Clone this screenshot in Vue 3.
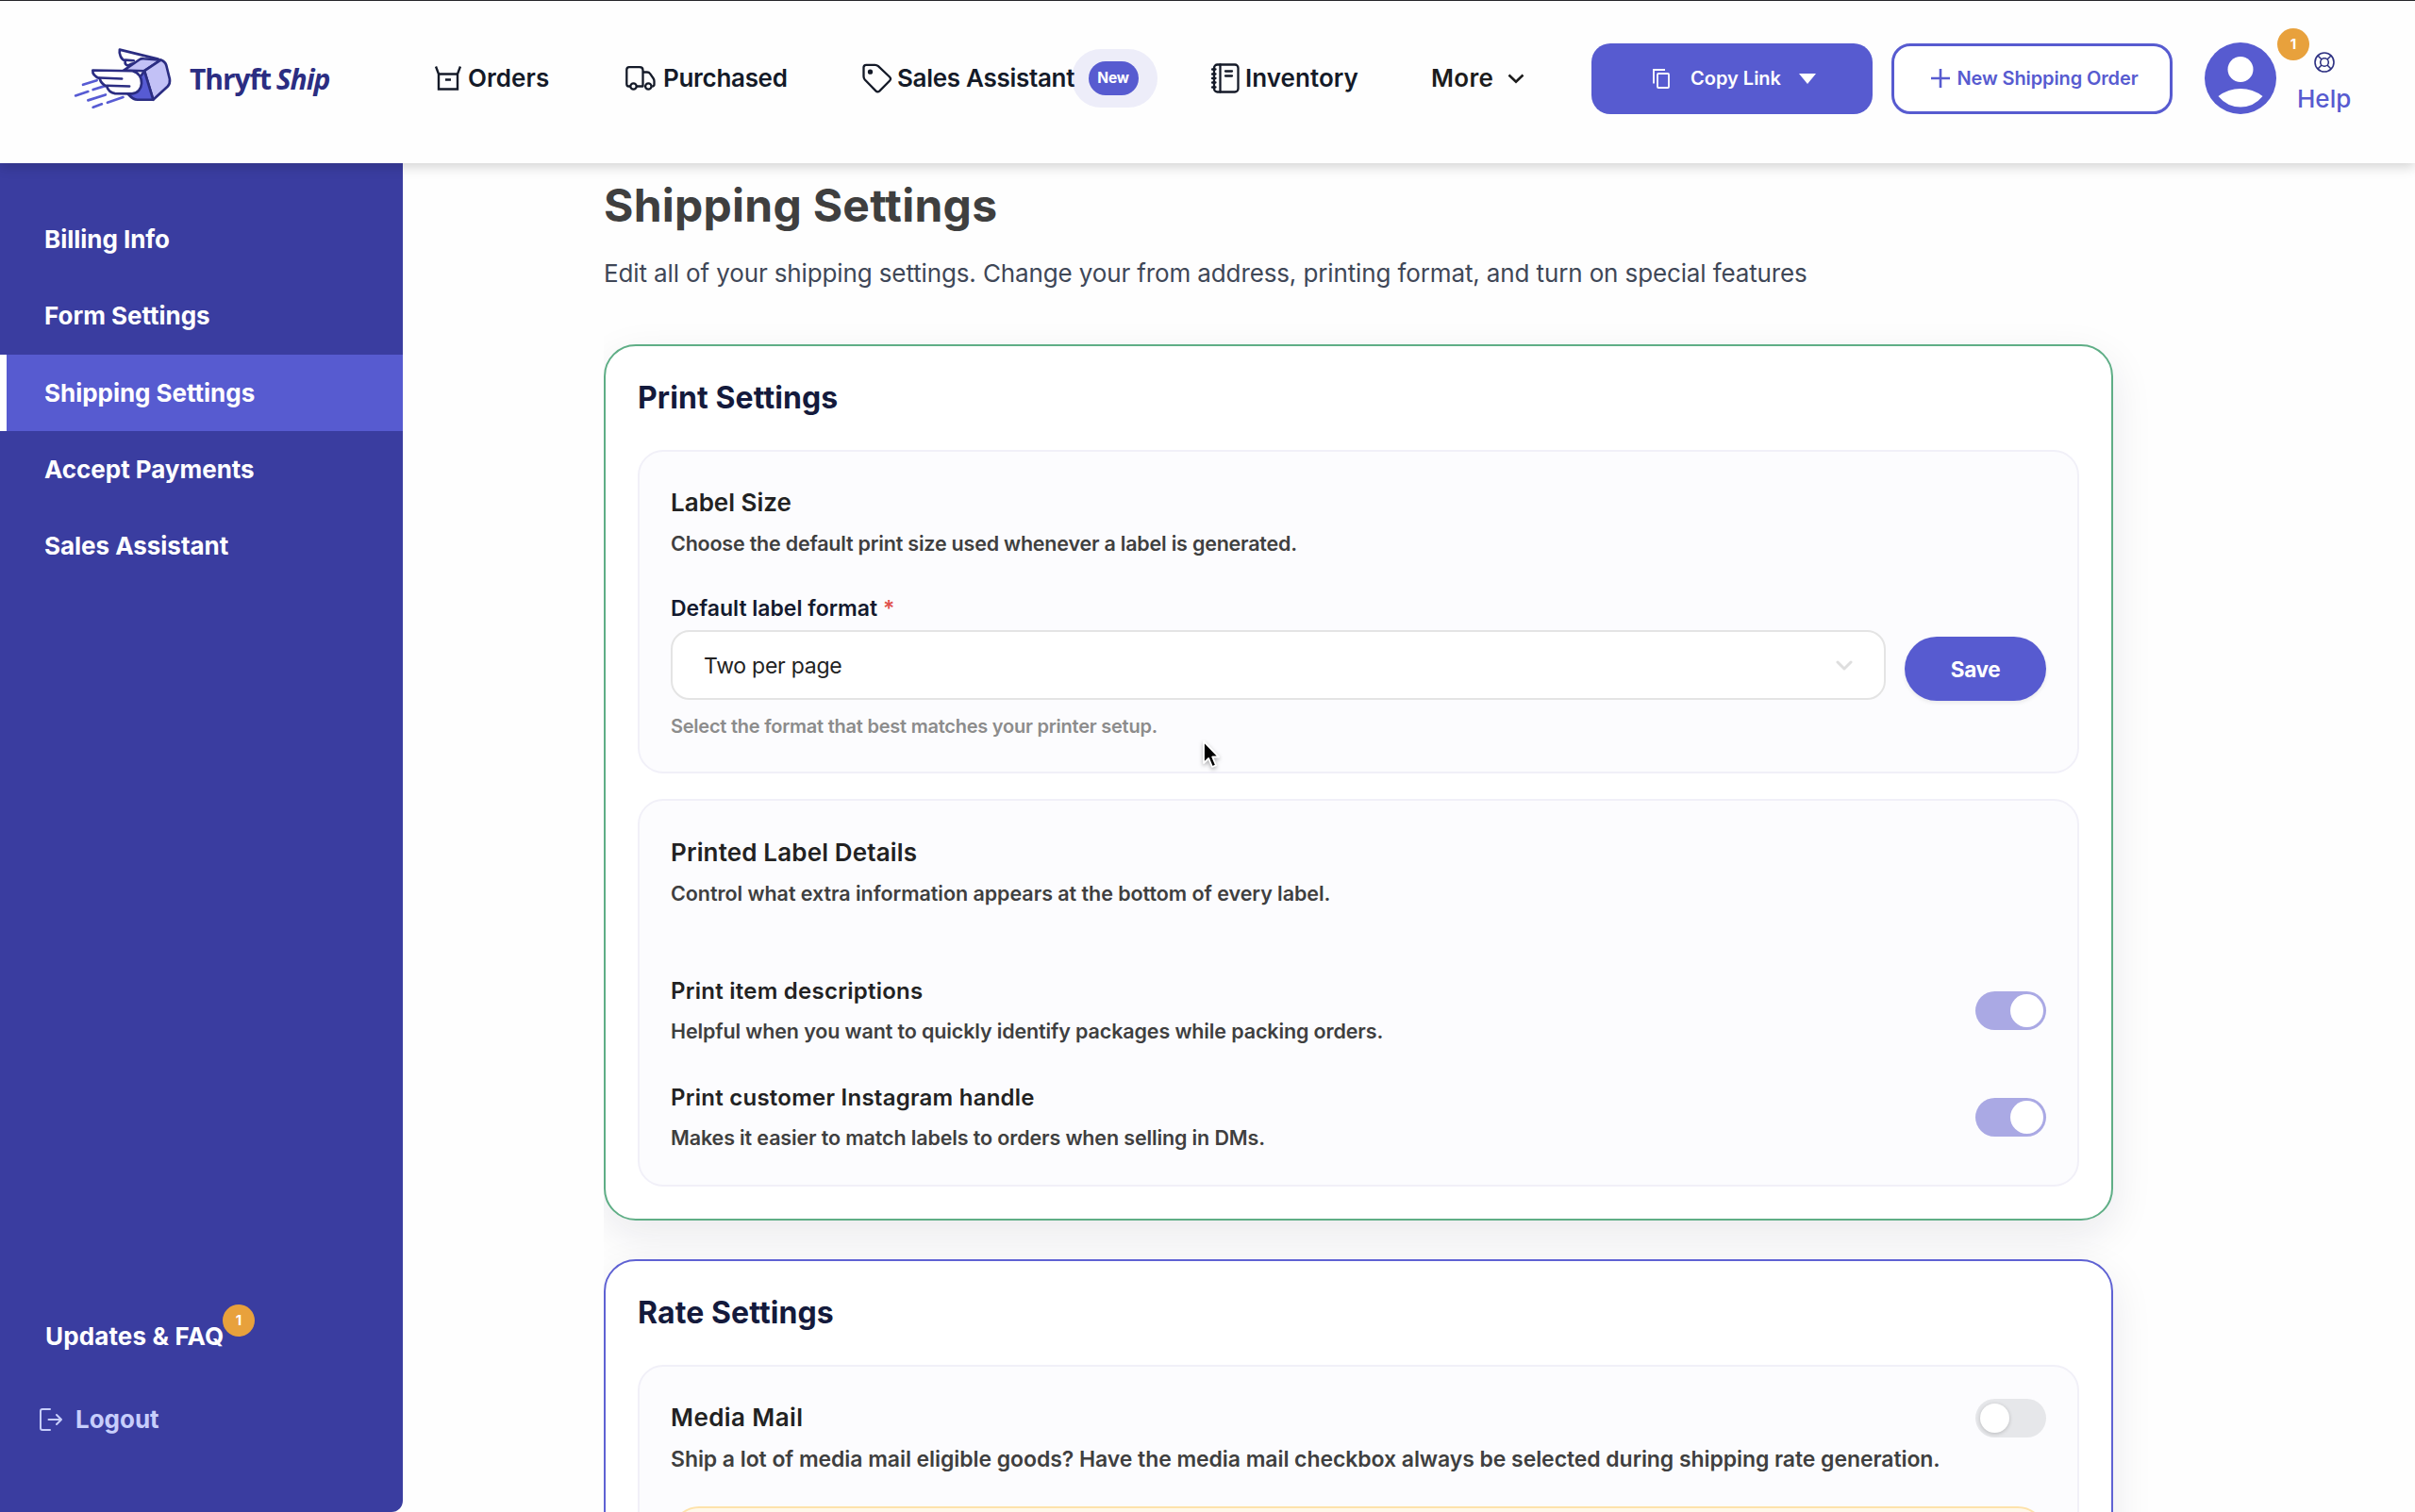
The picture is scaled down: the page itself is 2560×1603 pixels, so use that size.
<template>
  <div class="app">
    <header class="header">
      <div class="logo">
        <svg class="logo-mark" viewBox="50 55 320 205" fill="none" stroke-linecap="round" stroke-linejoin="round">
          <g stroke="#575bd3" stroke-width="8">
            <path d="M82 178 L126 164 M58 213 L98 200 M114 194 L152 182 M98 228 L154 210 M114 250 L142 240 M160 235 L210 218" />
          </g>
          <g stroke="#2b2d82" stroke-width="8">
            <path d="M199 66 L322 96 L236 112 C222 122 214 112 217 101 C204 98 196 80 199 66 Z" fill="#fff" />
            <path d="M218 99 L244 101" />
            <path d="M212 132 L262 98 Q268 94 276 95 L330 99 L278 134 Z" fill="#c2c1f6" />
            <path d="M330 99 Q344 104 348 116 L359 160 Q361 174 352 184 L306 226 L278 134 Z" fill="#c2c1f6" />
            <path d="M226 208 L278 134 L306 226 L256 226 Q242 226 226 208 Z" fill="#575bd3" />
            <path d="M113 132 L240 134 C282 144 276 206 238 207 L184 206 C168 204 162 196 158 184 C144 178 138 170 135 158 C120 152 112 142 113 132 Z" fill="#fff" />
            <path d="M135 156 L206 159 M158 181 L230 183" />
          </g>
        </svg>
        <span class="logo-name">Thryft</span>
        <span class="logo-name logo-ship">Ship</span>
      </div>

      <a class="nav-item orders">
        <svg class="icon-orders" viewBox="0 0 28 26" fill="none" stroke="currentColor" stroke-width="2.4">
          <path d="M1 .5 L4 8.5 H24 L27 .5 M4 8.5 V24.5 H24 V8.5 M11 14.5 H17" />
        </svg>
        <span>Orders</span>
      </a>
      <a class="nav-item">
        <svg class="icon-truck" viewBox="0 0 32 26" fill="none" stroke="currentColor" stroke-width="2.3" stroke-linejoin="round">
          <path d="M5 21.5 H3.2 Q1.3 21.5 1.3 19 V4 Q1.3 1.2 4 1.2 H15 Q18.5 1.2 18.5 4.5 V21.5 H12 M18.5 6.5 H23 Q25 6.5 26.3 8.3 L29.5 13 Q30.5 14.5 30.5 16 V19.5 Q30.5 21.5 28.2 21.5" />
          <circle cx="8.5" cy="21.5" r="3.2" />
          <circle cx="24.3" cy="21.5" r="3.2" />
        </svg>
        <span>Purchased</span>
      </a>
      <a class="nav-item">
        <svg class="icon-tag" viewBox="0 0 32 32" fill="none" stroke="currentColor" stroke-width="2.3" stroke-linejoin="round">
          <path d="M1.5 4.5 Q1.5 1.8 4.2 1.8 H13.5 Q15.5 1.8 17 3.2 L29 14.5 Q31 16.5 29.2 18.5 L18.2 29.6 Q16.2 31.2 14.4 29.4 L2.8 17.5 Q1.5 16 1.5 14 Z" />
          <circle cx="8.5" cy="9.2" r="1.5" fill="currentColor" />
        </svg>
        <span>Sales Assistant</span>
        <span class="new-halo"><span class="new-pill">New</span></span>
      </a>
      <a class="nav-item inventory">
        <svg class="icon-book" viewBox="0 0 30 32" fill="none" stroke="currentColor" stroke-width="2.3" stroke-linecap="round">
          <rect x="3" y="1.5" width="25.5" height="29" rx="3.5" />
          <path d="M9.5 1.5 V30.5 M15 8.5 H22 M15 13.5 H22 M1 6.5 H4.5 M1 11.5 H4.5 M1 16 H4.5 M1 20.5 H4.5 M1 25.5 H4.5" />
        </svg>
        <span>Inventory</span>
      </a>
      <a class="nav-item more">
        <span>More</span>
        <svg class="icon-more" viewBox="0 0 18 11" fill="none" stroke="currentColor" stroke-width="2.6">
          <path d="M1.5 1.5 L9 8.8 L16.5 1.5" />
        </svg>
      </a>

      <button class="btn btn-copy">
        <svg class="icon-copy" viewBox="0 0 18 21" fill="none" stroke="currentColor" stroke-width="1.8">
          <path d="M1 15.5 V1 H13" />
          <rect x="5" y="5" width="12" height="15" rx="1" />
        </svg>
        <span>Copy Link</span>
        <svg class="icon-caret" viewBox="0 0 18 11" fill="currentColor"><path d="M0 0 H18 L9 11 Z" /></svg>
      </button>
      <button class="btn btn-order">
        <svg class="icon-plus" viewBox="0 0 20 20" fill="none" stroke="currentColor" stroke-width="2.6">
          <path d="M10 0 V20 M0 10 H20" />
        </svg>
        <span>New Shipping Order</span>
      </button>

      <div class="account">
        <svg class="avatar" viewBox="0 0 76 76">
          <circle cx="38" cy="38" r="38" fill="#575bd0" />
          <circle cx="38" cy="28.5" r="13.5" fill="#fff" />
          <path d="M14.5 57 Q25 49 38 49 Q51 49 61.5 57 Q52 68.5 38 68.5 Q24 68.5 14.5 57 Z" fill="#fff" />
        </svg>
        <a class="help">
          <span class="badge help-badge">1</span>
          <svg class="icon-help" viewBox="0 0 22 22" fill="none" stroke="#2e3182" stroke-width="1.6">
            <circle cx="11" cy="11" r="10" />
            <circle cx="11" cy="11" r="4.3" />
            <path d="M4 4 L8 8 M18 4 L14 8 M4 18 L8 14 M18 18 L14 14" />
          </svg>
          <span>Help</span>
        </a>
      </div>
    </header>

    <div class="body">
      <aside class="sidebar">
        <nav>
          <a
            v-for="item in menu"
            :key="item"
            class="side-item"
            :class="{ active: item === activeItem }"
          >{{ item }}</a>
        </nav>
        <div class="side-bottom">
          <a class="updates">Updates &amp; FAQ<span class="badge">1</span></a>
          <a class="logout">
            <svg class="icon-logout" viewBox="0 0 24 24" fill="none" stroke="currentColor" stroke-width="2" stroke-linecap="round" stroke-linejoin="round">
              <path d="M11 1 H3 Q1 1 1 3 V21 Q1 23 3 23 H11 M9.5 12 H23 M18 7 L23 12 L18 17" />
            </svg>
            <span>Logout</span>
          </a>
        </div>
      </aside>

      <main class="main">
        <h1 class="page-title">Shipping Settings</h1>
        <p class="page-desc">Edit all of your shipping settings. Change your from address, printing format, and turn on special features</p>

        <div class="cards">
          <section class="card card-print">
            <h2 class="card-title">Print Settings</h2>
            <div class="panel panel-size">
              <h3 class="panel-title">Label Size</h3>
              <p class="panel-desc size-desc">Choose the default print size used whenever a label is generated.</p>
              <div class="form-row">
                <div class="field">
                  <label class="field-label">Default label format <span class="required">*</span></label>
                  <div class="select">
                    <span>{{ labelFormat }}</span>
                    <svg class="icon-select" viewBox="0 0 18 12" fill="none" stroke="#dedede" stroke-width="3" stroke-linecap="round" stroke-linejoin="round">
                      <path d="M2 2 L9 9 L16 2" />
                    </svg>
                  </div>
                  <p class="field-hint">Select the format that best matches your printer setup.</p>
                </div>
                <button class="save">Save</button>
              </div>
            </div>

            <div class="panel panel-details">
              <h3 class="panel-title details-title">Printed Label Details</h3>
              <p class="panel-desc details-desc">Control what extra information appears at the bottom of every label.</p>
              <div class="options">
                <div v-for="option in options" :key="option.title" class="option">
                  <div>
                    <h4 class="option-title">{{ option.title }}</h4>
                    <p class="panel-desc option-desc">{{ option.desc }}</p>
                  </div>
                  <span class="toggle" :class="{ on: option.enabled }"></span>
                </div>
              </div>
            </div>
          </section>

          <section class="card card-rate">
            <h2 class="card-title">Rate Settings</h2>
            <div class="panel panel-media">
              <div class="media-head">
                <h3 class="panel-title media-title">Media Mail</h3>
                <span class="toggle" :class="{ on: mediaMail }"></span>
              </div>
              <p class="media-desc">Ship a lot of media mail eligible goods? Have the media mail checkbox always be selected during shipping rate generation.</p>
              <div class="notice"></div>
            </div>
          </section>
        </div>
      </main>
    </div>

    <!-- mouse pointer -->
    <svg class="cursor" viewBox="0 0 20 32">
      <path d="M2 2 V25 L7.2 20 L11 29 L15 27.3 L11.2 18.5 H18 Z" fill="#000" stroke="#fff" stroke-width="1.8" stroke-linejoin="round" />
    </svg>
  </div>
</template>

<script setup>
import { ref } from 'vue';

const menu = [
  'Billing Info',
  'Form Settings',
  'Shipping Settings',
  'Accept Payments',
  'Sales Assistant'
];
const activeItem = ref('Shipping Settings');

const labelFormat = ref('Two per page');
const mediaMail = ref(false);

const options = ref([
  {
    title: 'Print item descriptions',
    desc: 'Helpful when you want to quickly identify packages while packing orders.',
    enabled: true
  },
  {
    title: 'Print customer Instagram handle',
    desc: 'Makes it easier to match labels to orders when selling in DMs.',
    enabled: true
  }
]);
</script>

<style>
body {
  margin: 0;
  background: #fff;
}
</style>

<style scoped>
.app {
  position: relative;
  display: flex;
  flex-direction: column;
  width: 2560px;
  height: 1603px;
  overflow: hidden;
  background: #fefefe;
  font-family: Inter, "Liberation Sans", sans-serif;
  color: #222;
}

.app * {
  box-sizing: border-box;
}

h1, h2, h3, h4, p {
  margin: 0;
}

span, a {
  white-space: nowrap;
}

button {
  font-family: inherit;
  border: none;
  padding: 0;
}

svg {
  display: block;
  flex-shrink: 0;
}

/* header */
.header {
  position: relative;
  z-index: 2;
  flex-shrink: 0;
  display: grid;
  grid-template-columns: 384px 202px 251px 370px 235px 168px 318px 332px 1fr;
  align-items: center;
  height: 173px;
  padding: 0 0 8px 77px;
  border-top: 1px solid #26262a;
  background: #fefefe;
  box-shadow: 0 4px 12px rgba(0, 0, 0, 0.17);
}

.logo {
  display: flex;
  align-items: center;
}

.logo-mark {
  width: 107px;
  height: 68px;
  margin-right: 17px;
}

.logo-name {
  font-family: "Open Sans", "Noto Sans", sans-serif;
  font-size: 30px;
  font-weight: 700;
  letter-spacing: -1.1px;
  color: #2b2d82;
}

.logo-ship {
  margin-left: 6px;
  font-style: italic;
}

.nav-item {
  display: flex;
  align-items: center;
  font-size: 26px;
  font-weight: 600;
  line-height: 32px;
  letter-spacing: -0.3px;
  color: #141a28;
}

.orders,
.inventory {
  letter-spacing: 0.05px;
}

.icon-orders {
  width: 28px;
  height: 26px;
  margin-right: 7px;
}

.icon-truck {
  width: 32px;
  height: 26px;
  margin-right: 8px;
}

.icon-tag {
  width: 32px;
  height: 32px;
  margin-right: 5px;
}

.icon-book {
  width: 30px;
  height: 32px;
  margin-right: 6px;
}

.icon-more {
  width: 18px;
  height: 11px;
  margin-left: 15px;
}

.more {
  margin-left: -2px;
  letter-spacing: 0.3px;
  color: #1c1c1c;
}

.new-halo {
  display: flex;
  align-items: center;
  justify-content: center;
  width: 91px;
  height: 62px;
  margin-left: -3px;
  padding-right: 3px;
  border-radius: 31px;
  background: rgba(86, 91, 208, 0.1);
}

.new-pill {
  width: 53px;
  height: 36px;
  border-radius: 18px;
  background: #575bd0;
  color: #fff;
  font-size: 15.5px;
  font-weight: 700;
  line-height: 36px;
  letter-spacing: -0.2px;
  text-align: center;
}

.btn {
  display: flex;
  align-items: center;
  justify-content: center;
  width: 298px;
  height: 75px;
  border-radius: 20px;
  font-size: 20px;
  font-weight: 600;
}

.btn-copy {
  padding-left: 5px;
  background: #575bd0;
  color: #fff;
}

.icon-copy {
  width: 18px;
  height: 21px;
  margin-right: 22px;
}

.icon-caret {
  width: 18px;
  height: 11px;
  margin-left: 19px;
}

.btn-order {
  padding-left: 5px;
  border: 3px solid #575bd0;
  background: #fff;
  color: #575bd0;
  letter-spacing: -0.12px;
}

.icon-plus {
  width: 20px;
  height: 20px;
  margin-right: 8px;
}

.account {
  display: flex;
  align-items: center;
}

.avatar {
  width: 76px;
  height: 76px;
}

.badge {
  display: inline-block;
  width: 34px;
  height: 34px;
  border-radius: 50%;
  background: #e8a13c;
  color: #fff;
  font-size: 15px;
  font-weight: 700;
  line-height: 34px;
  letter-spacing: 0;
  text-align: center;
}

.help {
  position: relative;
  display: flex;
  flex-direction: column;
  align-items: center;
  margin: 9px 0 0 22px;
  font-size: 26px;
  font-weight: 500;
  line-height: 32px;
  color: #575bd0;
}

.help-badge {
  position: absolute;
  top: -25px;
  left: -21px;
}

.icon-help {
  width: 22px;
  height: 22px;
  margin-bottom: 12px;
}

/* sidebar */
.body {
  flex: 1;
  display: flex;
  min-height: 0;
}

.sidebar {
  flex-shrink: 0;
  display: flex;
  flex-direction: column;
  justify-content: space-between;
  width: 427px;
  padding-top: 40px;
  border-radius: 0 0 12px 0;
  background: #3a3da0;
  font-size: 26px;
  font-weight: 700;
  letter-spacing: -0.03px;
  color: #fff;
}

.side-item {
  display: flex;
  align-items: center;
  height: 81.3px;
  padding-left: 47px;
}

.side-item.active {
  padding-left: 40px;
  border-left: 7px solid #fff;
  background: #575bd0;
}

.side-bottom {
  display: flex;
  flex-direction: column;
  gap: 56px;
  padding-bottom: 82px;
  line-height: 32px;
}

.updates {
  position: relative;
  align-self: flex-start;
  margin-left: 48px;
  letter-spacing: 0.14px;
}

.updates .badge {
  position: absolute;
  top: -18px;
  left: 188px;
}

.logout {
  display: flex;
  align-items: center;
  padding-left: 42px;
  color: #c7cefb;
}

.icon-logout {
  width: 24px;
  height: 24px;
  margin-right: 14px;
}

/* content */
.main {
  padding: 15px 0 0 213px;
}

.page-title {
  font-size: 48px;
  font-weight: 700;
  line-height: 60px;
  letter-spacing: 0.25px;
  color: #3f3f3f;
}

.page-desc {
  margin: 22px 0 55px;
  font-size: 26px;
  line-height: 40px;
  letter-spacing: -0.125px;
  color: #3f4757;
}

.cards {
  display: flex;
  flex-direction: column;
  gap: 41px;
  width: 1600px;
  /* shadow is cut on the left edge */
  clip-path: inset(-80px -80px -80px 0);
}

.card {
  padding: 35px 34px 34px;
  border: 2px solid #5fae86;
  border-radius: 34px;
  background: #fff;
  box-shadow: 0 15px 45px rgba(20, 24, 50, 0.09);
}

.card-rate {
  border-color: #5f62d3;
}

.card-title {
  margin-bottom: 35px;
  font-size: 32px;
  font-weight: 700;
  line-height: 40px;
  letter-spacing: 0.1px;
  color: #141a3c;
}

.panel {
  padding: 38px 33px 0;
  border: 2px solid #f1f0f8;
  border-radius: 27px;
  background: #fcfcfe;
}

.panel-size {
  height: 343px;
  margin-bottom: 27px;
}

.panel-details {
  height: 411px;
  padding-top: 39px;
}

.panel-media {
  height: 300px;
}

.panel-title {
  font-size: 26px;
  font-weight: 600;
  line-height: 32px;
}

.details-title {
  letter-spacing: 0.15px;
}

.media-title {
  letter-spacing: 0.4px;
}

.panel-desc {
  margin-top: 12px;
  font-size: 21.5px;
  font-weight: 600;
  line-height: 30px;
  letter-spacing: -0.13px;
  color: #3f3f3f;
}

.size-desc {
  letter-spacing: -0.21px;
}

.details-desc {
  letter-spacing: -0.05px;
}

.form-row {
  display: flex;
  align-items: flex-start;
  gap: 20px;
  margin-top: 39px;
}

.field {
  flex: 1;
}

.field-label {
  display: block;
  font-size: 23px;
  font-weight: 600;
  line-height: 30px;
  color: #141a2e;
}

.required {
  color: #e0524d;
}

.select {
  display: flex;
  align-items: center;
  justify-content: space-between;
  height: 74px;
  margin-top: 8px;
  padding: 1px 33px 0 33px;
  border: 2px solid #e4e4e4;
  border-radius: 20px;
  background: #fff;
  font-size: 23px;
  line-height: 30px;
  letter-spacing: -0.25px;
}

.icon-select {
  width: 18px;
  height: 12px;
}

.field-hint {
  margin-top: 14px;
  font-size: 20px;
  font-weight: 600;
  line-height: 28px;
  letter-spacing: -0.24px;
  color: #8c8c8c;
}

.save {
  width: 150px;
  height: 68px;
  margin-top: 44.5px;
  padding-top: 1px;
  border-radius: 34px;
  background: #575bd0;
  box-shadow: 0 2px 4px rgba(0, 0, 0, 0.08);
  color: #fff;
  font-size: 22.5px;
  font-weight: 700;
  letter-spacing: -0.4px;
}

.options {
  display: flex;
  flex-direction: column;
  gap: 39.5px;
  margin-top: 73px;
}

.option {
  display: flex;
  align-items: center;
  justify-content: space-between;
}

.option-title {
  font-size: 24px;
  font-weight: 600;
  line-height: 32px;
  letter-spacing: 0.25px;
}

.option-desc {
  margin-top: 11px;
}

.toggle {
  display: flex;
  align-items: center;
  width: 75px;
  height: 41px;
  padding: 0 5px;
  border-radius: 21px;
  background: #e6e7ea;
}

.toggle::after {
  content: '';
  width: 31px;
  height: 31px;
  border-radius: 50%;
  background: #fff;
  box-shadow: 0 1px 4px rgba(0, 0, 0, 0.2);
}

.toggle.on {
  justify-content: flex-end;
  padding: 0 3px;
  background: #aaa9e4;
}

.toggle.on::after {
  width: 35px;
  height: 35px;
  box-shadow: none;
}

.media-head {
  display: flex;
  align-items: center;
  justify-content: space-between;
  height: 32px;
}

.media-desc {
  margin: 12px 0 34px;
  font-size: 23px;
  font-weight: 600;
  line-height: 32px;
  letter-spacing: -0.07px;
  color: #3f3f3f;
  white-space: nowrap;
}

.notice {
  height: 100px;
  border: 2px solid #fde2ab;
  border-radius: 30px;
  background: #fff8ea;
}

.cursor {
  position: absolute;
  z-index: 3;
  top: 784px;
  left: 1274px;
  width: 20px;
  height: 32px;
  filter: drop-shadow(0 2px 2px rgba(0, 0, 0, 0.3));
}
</style>
